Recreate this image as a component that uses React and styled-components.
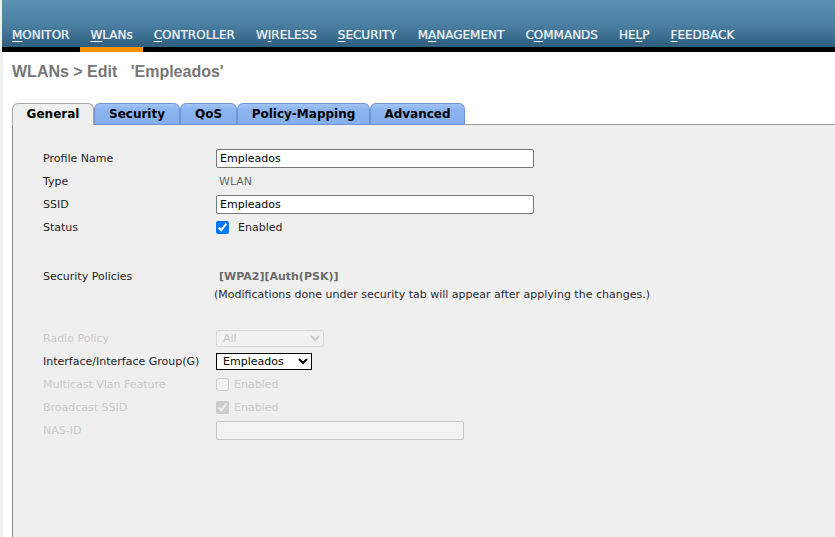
import React from "react";
import styled, { createGlobalStyle } from "styled-components";

const GlobalStyle = createGlobalStyle`
  html, body {
    margin: 0;
    padding: 0;
    background: #ffffff;
    font-family: "DejaVu Sans", Verdana, sans-serif;
  }
`;

const Page = styled.div`
  display: flex;
  flex-direction: column;
  min-height: 100vh;
  border-left: 3px solid #f0f0f0;
  box-sizing: border-box;
`;

const TopBar = styled.nav`
  display: flex;
  align-items: flex-end;
  height: 52px;
  margin-left: -1.5px;
  background: linear-gradient(
    to bottom,
    #5b92b4 0px,
    #4a7fa2 25px,
    #2f5e7e 47px,
    #000000 47px,
    #000000 52px
  );
`;

const NavItem = styled.a`
  display: flex;
  align-items: flex-end;
  height: 52px;
  box-sizing: border-box;
  padding: 0 10.5px 4px;
  border-bottom: 5px solid ${(p) => (p.$active ? "#ff9100" : "transparent")};
  color: #f4f8fb;
  font-size: 12px;
  line-height: 15px;
  text-decoration: none;
  white-space: nowrap;
  -webkit-text-stroke: 0.2px #f4f8fb;
`;

const AccessKey = styled.span`
  text-decoration: underline;
  text-underline-offset: 2px;
`;

const Content = styled.div`
  display: flex;
  flex-direction: column;
  flex: 1;
  padding: 11px 0 0 9px;
`;

const Title = styled.h1`
  margin: 0;
  font-family: "Liberation Sans", Arial, sans-serif;
  font-size: 16px;
  font-weight: bold;
  line-height: 18px;
  color: #777777;
  white-space: pre;
`;

const Tabs = styled.div`
  display: flex;
  margin-top: 22px;
  position: relative;
  z-index: 1;
`;

const Tab = styled.div`
  display: flex;
  align-items: center;
  justify-content: center;
  width: ${(p) => p.$w}px;
  height: 22px;
  box-sizing: border-box;
  border: 1px solid ${(p) => (p.$active ? "#a6a6a6" : "#6e96d3")};
  border-bottom: ${(p) => (p.$active ? "1px solid #efefef" : "1px solid #6e96d3")};
  border-radius: 6px 6px 0 0;
  margin-bottom: -1px;
  background: ${(p) =>
    p.$active ? "#efefef" : "linear-gradient(to bottom, #a2c3f4, #8ab3ef 6px, #86afed)"};
  font-size: 12px;
  font-weight: bold;
  color: #000000;
`;

const Panel = styled.div`
  flex: 1;
  background: #efefef;
  border-top: 1px solid #9a9a9a;
  border-left: 1px solid #8a8a8a;
  padding: 22px 0 40px 30px;
`;

const Row = styled.div`
  display: grid;
  grid-template-columns: 173px 1fr;
  align-items: ${(p) => (p.$top ? "start" : "center")};
  min-height: 23px;
  margin-top: ${(p) => p.$gap || 0}px;
`;

const Label = styled.div`
  font-size: 11px;
  line-height: 23px;
  color: ${(p) => (p.$disabled ? "#c9c9c9" : "#1e1e1e")};
  white-space: nowrap;
`;

const Cell = styled.div`
  display: flex;
  flex-direction: column;
  align-items: flex-start;
`;

const Plain = styled.span`
  padding-left: 3px;
  font-size: 11px;
  line-height: 23px;
  color: #6a6a6a;
  font-weight: ${(p) => (p.$bold ? "bold" : "normal")};
`;

const Note = styled.span`
  margin-left: -2px;
  font-size: 11px;
  line-height: 14px;
  color: #2b2b2b;
`;

const TextInput = styled.input`
  width: ${(p) => p.$w}px;
  height: 19px;
  box-sizing: border-box;
  margin: 0;
  padding: 0 3px;
  border: 1px solid ${(p) => (p.disabled ? "#c6c6c6" : "#777777")};
  border-radius: 2px;
  background: ${(p) => (p.disabled ? "#f3f3f3" : "#ffffff")};
  font-family: "DejaVu Sans", Verdana, sans-serif;
  font-size: 11px;
  color: #000000;
`;

const Select = styled.select`
  width: ${(p) => p.$w}px;
  height: 17px;
  box-sizing: border-box;
  margin: 0;
  padding: 0 2px;
  border: 1px solid ${(p) => (p.disabled ? "#cfcfcf" : "#000000")};
  border-radius: ${(p) => (p.disabled ? "2px" : "0")};
  background: ${(p) => (p.disabled ? "#f3f3f3" : "#ffffff")};
  font-family: "DejaVu Sans", Verdana, sans-serif;
  font-size: 11px;
  color: ${(p) => (p.disabled ? "#b9b9b9" : "#000000")};
`;

const Check = styled.label`
  display: flex;
  align-items: center;
  gap: ${(p) => p.$gap}px;
  font-size: 11px;
  color: ${(p) => (p.$disabled ? "#c9c9c9" : "#1e1e1e")};

  input {
    width: 13px;
    height: 13px;
    margin: 0;
  }
`;

const navItems = [
  { pre: "", key: "M", post: "ONITOR" },
  { pre: "", key: "W", post: "LANs", active: true },
  { pre: "", key: "C", post: "ONTROLLER" },
  { pre: "W", key: "I", post: "RELESS" },
  { pre: "", key: "S", post: "ECURITY" },
  { pre: "M", key: "A", post: "NAGEMENT" },
  { pre: "C", key: "O", post: "MMANDS" },
  { pre: "HE", key: "L", post: "P" },
  { pre: "", key: "F", post: "EEDBACK" },
];

const tabs = [
  { label: "General", w: 82, active: true },
  { label: "Security", w: 86 },
  { label: "QoS", w: 57 },
  { label: "Policy-Mapping", w: 133 },
  { label: "Advanced", w: 95 },
];

const App = () => {
  return (
    <Page>
      <GlobalStyle />
      <TopBar>
        {navItems.map((n) => (
          <NavItem key={n.pre + n.key + n.post} $active={n.active}>
            {n.pre}
            <AccessKey>{n.key}</AccessKey>
            {n.post}
          </NavItem>
        ))}
      </TopBar>
      <Content>
        <Title>{"WLANs > Edit   'Empleados'"}</Title>
        <Tabs>
          {tabs.map((t) => (
            <Tab key={t.label} $w={t.w} $active={t.active}>
              {t.label}
            </Tab>
          ))}
        </Tabs>
        <Panel>
          <Row>
            <Label>Profile Name</Label>
            <Cell>
              <TextInput $w={318} defaultValue="Empleados" />
            </Cell>
          </Row>
          <Row>
            <Label>Type</Label>
            <Cell>
              <Plain>WLAN</Plain>
            </Cell>
          </Row>
          <Row>
            <Label>SSID</Label>
            <Cell>
              <TextInput $w={318} defaultValue="Empleados" />
            </Cell>
          </Row>
          <Row>
            <Label>Status</Label>
            <Cell>
              <Check $gap={9}>
                <input type="checkbox" defaultChecked />
                Enabled
              </Check>
            </Cell>
          </Row>

          <Row $gap={26} $top>
            <Label>Security Policies</Label>
            <Cell>
              <Plain $bold>[WPA2][Auth(PSK)]</Plain>
              <Note>
                (Modifications done under security tab will appear after applying the changes.)
              </Note>
            </Cell>
          </Row>

          <Row $gap={25}>
            <Label $disabled>Radio Policy</Label>
            <Cell>
              <Select $w={108} disabled defaultValue="All">
                <option>All</option>
              </Select>
            </Cell>
          </Row>
          <Row>
            <Label>Interface/Interface Group(G)</Label>
            <Cell>
              <Select $w={96} defaultValue="Empleados">
                <option>Empleados</option>
              </Select>
            </Cell>
          </Row>
          <Row>
            <Label $disabled>Multicast Vlan Feature</Label>
            <Cell>
              <Check $gap={5} $disabled>
                <input type="checkbox" disabled />
                Enabled
              </Check>
            </Cell>
          </Row>
          <Row>
            <Label $disabled>Broadcast SSID</Label>
            <Cell>
              <Check $gap={5} $disabled>
                <input type="checkbox" disabled defaultChecked />
                Enabled
              </Check>
            </Cell>
          </Row>
          <Row>
            <Label $disabled>NAS-ID</Label>
            <Cell>
              <TextInput $w={248} disabled />
            </Cell>
          </Row>
        </Panel>
      </Content>
    </Page>
  );
};

export default App;
